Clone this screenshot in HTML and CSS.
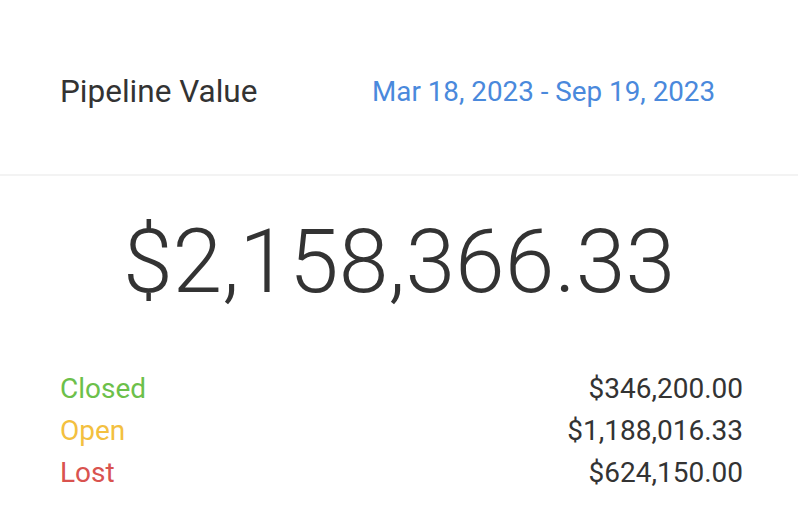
FILE: index.html
```html
<!DOCTYPE html>
<html lang="en">
<head>
  <meta charset="UTF-8">
  <title>Pipeline Value</title>
  <link rel="stylesheet" href="styles.css">
</head>
<body>
  <div class="widget">
    <div class="widget-header">
      <div class="title">Pipeline Value</div>
      <div class="date-range">Mar 18, 2023 - Sep 19, 2023</div>
    </div>

    <div class="total">$2,158,366.33</div>

    <div class="breakdown">
      <div class="row">
        <span class="label closed">Closed</span>
        <span class="amount">$346,200.00</span>
      </div>
      <div class="row">
        <span class="label open">Open</span>
        <span class="amount">$1,188,016.33</span>
      </div>
      <div class="row">
        <span class="label lost">Lost</span>
        <span class="amount">$624,150.00</span>
      </div>
    </div>
  </div>
</body>
</html>
```

FILE: styles.css
```css
body { margin: 0; background: #fff; font-family: Roboto, "Liberation Sans", sans-serif; color: #333; }
.widget { width: 798px; }
.widget-header { display: grid; grid-template-columns: 312px auto; align-items: center; height: 176px; padding: 8px 60px 0; border-bottom: 2px solid #f3f3f3; box-sizing: border-box; }
.title { font-size: 31.5px; color: #333; }
.date-range { font-size: 27.8px; color: #4a89dc; }
.total { text-align: center; font-size: 89.5px; font-weight: 300; color: #333; margin-top: 21px; line-height: 130px; }
.breakdown { padding: 0 55px 0 60px; margin-top: 41px; }
.row { display: flex; justify-content: space-between; font-size: 28px; line-height: 42px; }
.closed { color: #6cc04a; }
.open { color: #f3c03f; }
.lost { color: #d9534f; }
.amount { color: #333; }
```
